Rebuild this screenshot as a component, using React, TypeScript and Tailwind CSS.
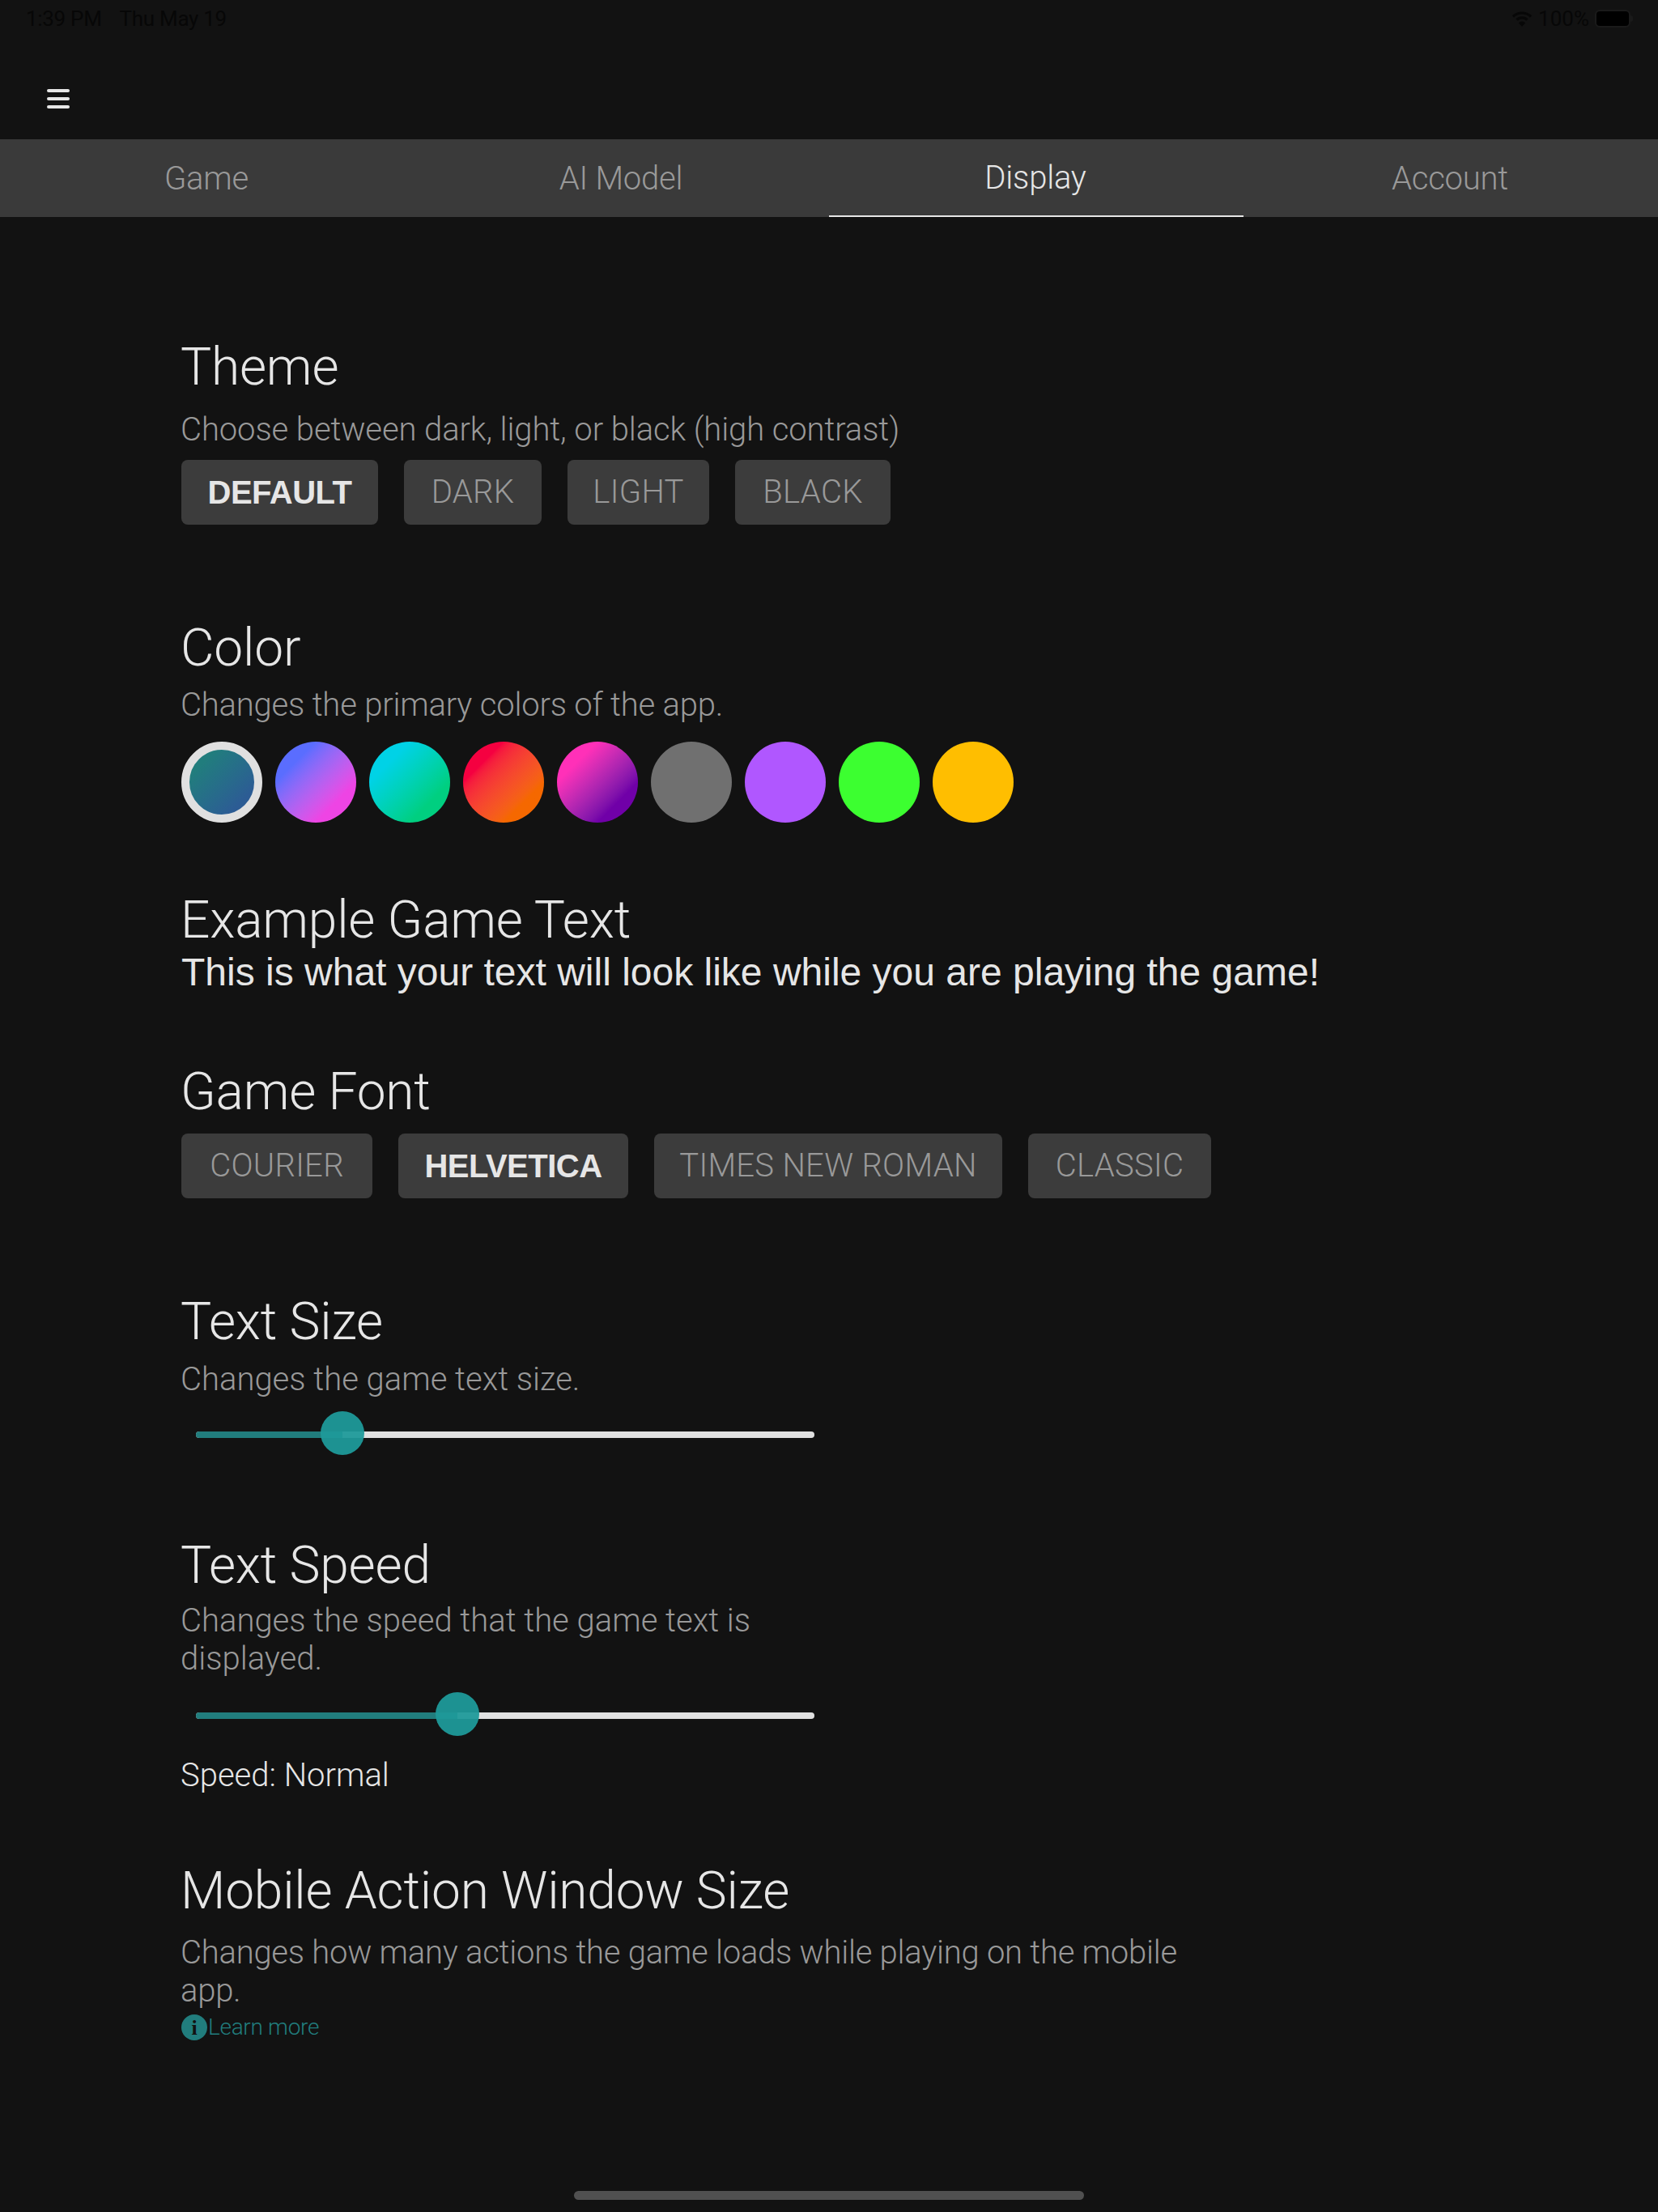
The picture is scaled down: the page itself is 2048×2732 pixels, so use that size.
import React from 'react';

const themes = [
  { label: 'DEFAULT', width: 'w-[243px]', active: true },
  { label: 'DARK', width: 'w-[170px]' },
  { label: 'LIGHT', width: 'w-[175px]' },
  { label: 'BLACK', width: 'w-[192px]' },
];

const fonts = [
  { label: 'COURIER', width: 'w-[236px]' },
  { label: 'HELVETICA', width: 'w-[284px]', active: true },
  { label: 'TIMES NEW ROMAN', width: 'w-[430px]' },
  { label: 'CLASSIC', width: 'w-[226px]' },
];

function Heading({ children, className = '' }: { children: React.ReactNode; className?: string }) {
  return <h2 className={`-ml-[1px] text-[64px] leading-[72px] font-light tracking-[-0.2px] text-[#e6e6e6] ${className}`}>{children}</h2>;
}

function Desc({ children, className = '' }: { children: React.ReactNode; className?: string }) {
  return <p className={`-ml-[1px] text-[40px] leading-[47px] font-light text-[#999999] ${className}`}>{children}</p>;
}

function Choice({ label, width, active }: { label: string; width: string; active?: boolean }) {
  return (
    <div
      className={`h-20 rounded-lg bg-[#3c3c3c] flex items-center justify-center text-[40px] ${width} ${
        active ? "font-['Liberation_Sans'] font-bold tracking-[-0.5px] text-[#e6e6e6]" : 'font-light tracking-[0.3px] text-[#999999]'
      }`}
    >
      {label}
    </div>
  );
}

function Slider({ fill, thumb }: { fill: string; thumb: string }) {
  return (
    <div className="ml-[18px] w-[764px] h-2 rounded-full bg-[#e0e0e0] relative">
      <div className={`h-2 rounded-l-full bg-[#217d7d] ${fill}`} />
      <div className={`absolute top-[-25px] w-[54px] h-[54px] rounded-full bg-[#1f9a9a]/95 ${thumb}`} />
    </div>
  );
}

export default function App() {
  return (
    <div className="w-[2048px] h-[2732px] bg-[#121212] font-['Roboto',sans-serif] relative overflow-hidden">
      {/* Status bar */}
      <div className="h-[46px] pl-8 pr-[31px] flex items-center justify-between text-[26px] text-[#070707]">
        <div className="flex gap-[22px] tracking-[-0.3px]">
          <span>1:39 PM</span>
          <span>Thu May 19</span>
        </div>
        <div className="flex items-center gap-[7px]">
          <svg width="26" height="20" viewBox="0 0 26 20" fill="none" stroke="#070707" strokeWidth="3.2">
            <path d="M2 7.5C8 1.5 18 1.5 24 7.5" />
            <path d="M6.5 11.5C10 8 16 8 19.5 11.5" />
            <path d="M13 20L8.8 15.2C11 13 15 13 17.2 15.2Z" fill="#070707" stroke="none" />
          </svg>
          <span>100%</span>
          <div className="flex items-center">
            <div className="w-[44px] h-[22px] rounded-md bg-black border-2 border-[#1a1a1a]" />
            <div className="w-[3px] h-2 rounded-r-sm bg-[#1a1a1a]" />
          </div>
        </div>
      </div>

      {/* Header */}
      <div className="h-[126px] pl-[58px] pt-16">
        <div className="w-7 flex flex-col gap-[6px]">
          <div className="h-1 rounded-sm bg-[#e6e6e6]" />
          <div className="h-1 rounded-sm bg-[#e6e6e6]" />
          <div className="h-1 rounded-sm bg-[#e6e6e6]" />
        </div>
      </div>

      {/* Tabs */}
      <div className="h-24 bg-[#3a3a3a] grid grid-cols-4 text-[40px] font-light tracking-[-0.2px] text-[#999999]">
        <div className="pt-[2px] pr-[2px] flex items-center justify-center">Game</div>
        <div className="pt-[2px] pr-[2px] flex items-center justify-center">AI Model</div>
        <div className="pt-[2px] pr-[2px] flex items-center justify-center text-[#e6e6e6] border-b-2 border-[#e6e6e6]">Display</div>
        <div className="pt-[2px] pr-[2px] flex items-center justify-center">Account</div>
      </div>

      <div className="pl-[224px] pt-[150px]">
        <Heading>Theme</Heading>
        <Desc className="mt-[17px] tracking-[-0.1px]">Choose between dark, light, or black (high contrast)</Desc>
        <div className="flex gap-8 mt-[14px]">
          {themes.map((t) => (
            <Choice key={t.label} {...t} />
          ))}
        </div>

        <Heading className="mt-[117px]">Color</Heading>
        <Desc className="mt-[10px] tracking-[-0.2px]">Changes the primary colors of the app.</Desc>
        <div className="flex gap-4 mt-[22px]">
          <div className="w-[100px] h-[100px] rounded-full border-[10px] border-[#e0e0e0] bg-linear-to-br from-[#217d7d] from-20% to-[#2c5c94] to-80%" />
          <div className="w-[100px] h-[100px] rounded-full bg-linear-to-br from-[#5a6dff] from-25% to-[#ee44e4] to-75%" />
          <div className="w-[100px] h-[100px] rounded-full bg-linear-to-br from-[#00d2e6] from-25% to-[#00cf80] to-75%" />
          <div className="w-[100px] h-[100px] rounded-full bg-linear-to-br from-[#f50040] from-25% to-[#f56800] to-75%" />
          <div className="w-[100px] h-[100px] rounded-full bg-linear-to-br from-[#ff30b8] from-25% to-[#7000a8] to-75%" />
          <div className="w-[100px] h-[100px] rounded-full bg-[#707070]" />
          <div className="w-[100px] h-[100px] rounded-full bg-[#b057ff]" />
          <div className="w-[100px] h-[100px] rounded-full bg-[#3cff30]" />
          <div className="w-[100px] h-[100px] rounded-full bg-[#ffbe00]" />
        </div>

        <Heading className="mt-[85px]">Example Game Text</Heading>
        <p className="font-['Liberation_Sans'] text-[48px] leading-[56px] text-[#e6e6e6]">
          This is what your text will look like while you are playing the game!
        </p>

        <Heading className="mt-[84px]">Game Font</Heading>
        <div className="flex gap-8 mt-[15px]">
          {fonts.map((f) => (
            <Choice key={f.label} {...f} />
          ))}
        </div>

        <Heading className="mt-[117px]">Text Size</Heading>
        <Desc className="mt-[11px]">Changes the game text size.</Desc>
        <div className="mt-[41px]">
          <Slider fill="w-[181px]" thumb="left-[154px]" />
        </div>

        <Heading className="mt-[122px]">Text Speed</Heading>
        <Desc className="mt-[8px] w-[800px]">Changes the speed that the game text is displayed.</Desc>
        <div className="mt-[43px]">
          <Slider fill="w-[323px]" thumb="left-[296px]" />
        </div>
        <p className="-ml-[1px] text-[40px] leading-[47px] font-light text-[#e6e6e6] mt-[46px]">Speed: Normal</p>

        <Heading className="mt-[84px]">Mobile Action Window Size</Heading>
        <Desc className="mt-[16px] w-[1260px] tracking-[-0.25px]">Changes how many actions the game loads while playing on the mobile app.</Desc>
        <div className="flex items-center mt-[4px]">
          <div className="w-8 h-8 rounded-full bg-[#217d7d] flex items-center justify-center text-[26px] font-bold text-[#121212] font-['Liberation_Serif']">i</div>
          <span className="ml-[1px] text-[28px] leading-[36px] font-light tracking-[-0.3px] text-[#217d7d]">Learn more</span>
        </div>
      </div>

      {/* Home indicator */}
      <div className="absolute bottom-[15px] left-[709px] w-[630px] h-[11px] rounded-full bg-[#505050]" />
    </div>
  );
}
